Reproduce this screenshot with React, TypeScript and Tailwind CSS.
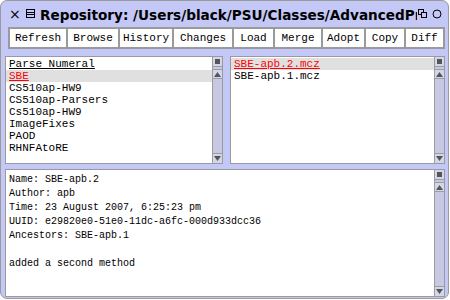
import React from "react";

const buttons = [
  { label: "Refresh", w: "w-[58px]" },
  { label: "Browse", w: "w-[52px]" },
  { label: "History", w: "w-[54px]" },
  { label: "Changes", w: "w-[60px]" },
  { label: "Load", w: "w-[41px]" },
  { label: "Merge", w: "w-[48px]" },
  { label: "Adopt", w: "w-[43px]" },
  { label: "Copy", w: "w-[40px]" },
  { label: "Diff", w: "w-[39px]" },
];

const packages = [
  "Parse Numeral",
  "SBE",
  "CS510ap-HW9",
  "CS510ap-Parsers",
  "Cs510ap-HW9",
  "ImageFixes",
  "PAOD",
  "RHNFAtoRE",
];

const versions = ["SBE-apb.2.mcz", "SBE-apb.1.mcz"];

const info = [
  "Name: SBE-apb.2",
  "Author: apb",
  "Time: 23 August 2007, 6:25:23 pm",
  "UUID: e29820e0-51e0-11dc-a6fc-000d933dcc36",
  "Ancestors: SBE-apb.1",
  "",
  "added a second method",
];

const Scrollbar = () => (
  <div className="w-[10px] flex flex-col bg-[#c7c9e2] border-l border-[#9c9c9c]">
    <div className="h-[10px] flex items-center justify-center border-b border-[#9c9c9c] bg-[#d4d6ea]">
      <div className="w-[5px] h-[5px] bg-[#555]" />
    </div>
    <div className="h-[10px] mt-[2px] flex items-center justify-center border-y border-[#9c9c9c] bg-[#d4d6ea]">
      <svg width="7" height="5" viewBox="0 0 7 5">
        <polygon points="3.5,0 7,5 0,5" fill="#555" />
      </svg>
    </div>
    <div className="flex-1" />
    <div className="h-[10px] flex items-center justify-center border-t border-[#9c9c9c] bg-[#d4d6ea]">
      <svg width="7" height="5" viewBox="0 0 7 5">
        <polygon points="0,0 7,0 3.5,5" fill="#555" />
      </svg>
    </div>
  </div>
);

export default function App() {
  return (
    <div className="w-[450px] h-[300px] bg-white overflow-hidden">
      <div className="w-[449px] h-[299px] rounded-[7px] border border-[#9a9a9a] bg-[#c3c8f6] flex flex-col">
        {/* title bar */}
        <div className="h-[25px] flex items-center pl-[8px] pr-[6px] shrink-0">
          <span className="w-[11px] text-[14px] leading-none text-black font-['DejaVu_Sans',sans-serif]">
            ×
          </span>
          <svg width="9" height="9" viewBox="0 0 9 9" className="ml-[6px]">
            <rect x="0.5" y="0.5" width="8" height="8" fill="none" stroke="#000" />
            <line x1="1" y1="3.5" x2="8" y2="3.5" stroke="#000" />
            <line x1="1" y1="5.5" x2="8" y2="5.5" stroke="#000" />
          </svg>
          <div className="ml-[5px] flex-1 overflow-hidden whitespace-nowrap">
            <span className="text-[13.6px] font-bold text-black font-['DejaVu_Sans',sans-serif]">
              Repository: /Users/black/PSU/Classes/AdvancedProgramming
            </span>
          </div>
          <svg width="9" height="9" viewBox="0 0 9 9" className="ml-[1px]">
            <rect x="0.5" y="0.5" width="5" height="5" fill="none" stroke="#000" />
            <rect x="3.5" y="3.5" width="5" height="5" fill="#c3c8f6" stroke="#000" />
          </svg>
          <svg width="10" height="10" viewBox="0 0 10 10" className="ml-[5px]">
            <circle cx="5" cy="5" r="4" fill="none" stroke="#000" />
          </svg>
        </div>

        {/* button row */}
        <div className="ml-[7px] mt-[1px] h-[22px] flex border border-[#9a9a9a] bg-white w-fit shrink-0">
          {buttons.map((b) => (
            <div
              key={b.label}
              className={`${b.w} h-full flex items-center justify-center border border-[#9a9a9a] text-[11px] text-black font-['Liberation_Mono',monospace]`}
            >
              {b.label}
            </div>
          ))}
        </div>

        {/* top panes */}
        <div className="mt-[7px] ml-[4px] mr-[3px] h-[108px] flex gap-[7px] shrink-0">
          <div className="w-[218px] flex border border-[#9a9a9a] bg-white">
            <div className="flex-1 pt-[1px] text-[11px] leading-[12px] text-black font-['Liberation_Mono',monospace]">
              {packages.map((p, i) => (
                <div
                  key={p}
                  className={`pl-[3px] h-[12px] whitespace-nowrap ${i === 1 ? "bg-[#e0e0e0] text-[#ff0000] underline" : ""} ${i === 0 ? "underline" : ""}`}
                >
                  {p}
                </div>
              ))}
            </div>
            <Scrollbar />
          </div>
          <div className="flex-1 flex border border-[#9a9a9a] bg-white">
            <div className="flex-1 pt-[1px] text-[11px] leading-[12px] text-black font-['Liberation_Mono',monospace]">
              {versions.map((v, i) => (
                <div
                  key={v}
                  className={`pl-[3px] h-[12px] whitespace-nowrap ${i === 0 ? "bg-[#e0e0e0] text-[#ff0000] underline" : ""}`}
                >
                  {v}
                </div>
              ))}
            </div>
            <Scrollbar />
          </div>
        </div>

        {/* bottom pane */}
        <div className="mt-[5px] ml-[4px] mr-[3px] h-[128px] flex border border-[#9a9a9a] bg-white shrink-0">
          <div className="flex-1 pt-[3px] pl-[3px] text-[10px] leading-[14px] text-black font-['Liberation_Mono',monospace]">
            {info.map((l, i) => (
              <div key={i} className="h-[14px] whitespace-nowrap">
                {l}
              </div>
            ))}
          </div>
          <Scrollbar />
        </div>
      </div>
    </div>
  );
}
